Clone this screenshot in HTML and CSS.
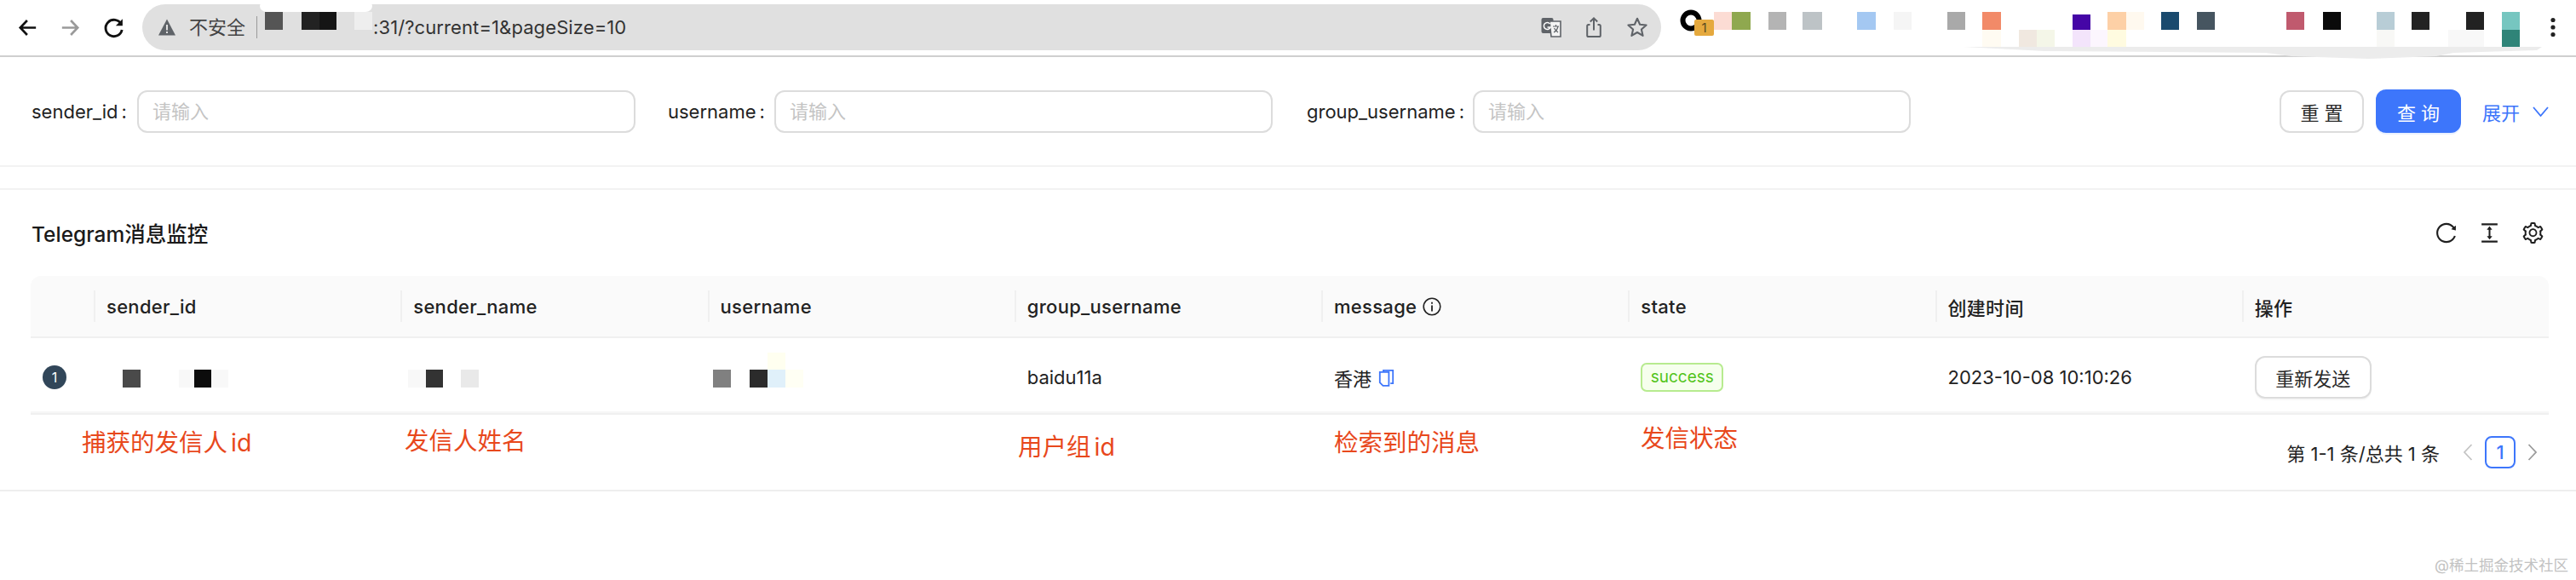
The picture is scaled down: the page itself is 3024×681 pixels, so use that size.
FILE: index.html
```html
<!DOCTYPE html>
<html lang="zh-CN">
<head>
<meta charset="utf-8">
<title>Telegram消息监控</title>
<link rel="stylesheet" href="styles.css">
</head>
<body>
<header class="chrome">
  <div class="nav-btn"><svg class="nav-icon" viewBox="0 0 24 24"><path d="M20 12H5M11.5 5 4.8 12l6.7 7" fill="none" stroke="#111" stroke-width="2.2"/></svg></div>
  <div class="nav-btn"><svg class="nav-icon" viewBox="0 0 24 24"><path d="M4 12h15M12.5 5l6.7 7-6.7 7" fill="none" stroke="#9a9a9a" stroke-width="2.2"/></svg></div>
  <div class="nav-btn"><svg class="nav-icon" viewBox="0 0 24 24"><path d="M19.2 8.6A8 8 0 1 0 20 14" fill="none" stroke="#111" stroke-width="2.4"/><path d="M20.6 3.6v6.6h-6.6z" fill="#111"/></svg></div>
  <div class="omnibox">
    <svg class="warn" viewBox="0 0 22 22"><path d="M11 1.5 21 20.5H1z" fill="#5f6368"/><path d="M10 8h2v6.5h-2zM10 16h2v2h-2z" fill="#e0e0e0"/></svg>
    <span class="secure">不安全</span>
    <span class="omni-divider"></span>
    <span class="url">:31/?current=1&amp;pageSize=10</span>
    <div class="omni-actions">
      <div class="omni-btn"><svg class="omni-icon" viewBox="0 0 26 26"><rect x="1.5" y="2" width="14" height="18" rx="2" fill="#5f6368"/><path d="M11 6h13v18H13z" fill="#f4f4f4" stroke="#5f6368" stroke-width="1.6"/><path d="M11.5 9a4 4 0 1 0 .6 4H8.5" fill="none" stroke="#fff" stroke-width="1.5"/><path d="M15 12h7M18.5 10v2M21 12c-1 4-3 6-5 7M16.5 14c1 2 3 4 4.5 5" fill="none" stroke="#5f6368" stroke-width="1.2"/></svg></div>
      <div class="omni-btn"><svg class="omni-icon" viewBox="0 0 26 26"><path d="M8.5 10H6.8a1.6 1.6 0 0 0-1.6 1.6v10.8A1.6 1.6 0 0 0 6.800 24h12.400a1.600 1.600 0 0 0 1.600-1.600V11.600A1.600 1.600 0 0 0 19.200 10H17.500M13 16.500V2.500M8.800 6.500 13 2.300l4.200 4.200" fill="none" stroke="#5f6368" stroke-width="2"/></svg></div>
      <div class="omni-btn"><svg class="omni-icon" viewBox="0 0 26 26"><path d="m13 2.800 3.100 7 7.500.7-5.700 5 1.700 7.400-6.600-3.900-6.600 3.900 1.700-7.400-5.700-5 7.500-.7z" fill="none" stroke="#5f6368" stroke-width="2.100" stroke-linejoin="round"/></svg></div>
    </div>
  </div>
  <div class="ext">
    <svg class="ext-ring" viewBox="0 0 26 26"><circle cx="13" cy="13" r="9.500" fill="none" stroke="#000" stroke-width="6"/></svg>
    <span class="ext-badge">1</span>
  </div>
  <svg class="kebab" viewBox="0 0 6 24"><circle cx="3" cy="3.500" r="2.600" fill="#222"/><circle cx="3" cy="12" r="2.600" fill="#222"/><circle cx="3" cy="20.500" r="2.600" fill="#222"/></svg>
  <svg class="chrome-mask" viewBox="0 0 3024 68">
    <rect x="305" y="0" width="132" height="14" rx="8" fill="#fff"/>
    <rect x="311" y="14" width="21" height="21" fill="#555"/>
    <rect x="354" y="14" width="21" height="21" fill="#222"/>
    <rect x="375" y="14" width="20" height="21" fill="#151515"/>
    <rect x="416" y="14" width="21" height="21" fill="#eee"/>
    <path d="M2305 55H2984L2978 59 2880 62 2860 66 2780 69 2690 66 2660 62 2400 60Z" fill="#ececec"/>
    <rect x="2012" y="14" width="21" height="21" fill="#fcdcd4"/>
    <rect x="2033" y="14" width="22" height="21" fill="#8fa84f"/>
    <rect x="2076" y="14" width="21" height="21" fill="#b4b4b4"/>
    <rect x="2116" y="14" width="23" height="21" fill="#bdc3c6"/>
    <rect x="2180" y="14" width="22" height="21" fill="#a4c8f2"/>
    <rect x="2223" y="14" width="21" height="21" fill="#f5f5f5"/>
    <rect x="2286" y="14" width="21" height="21" fill="#a9a9a9"/>
    <rect x="2327" y="14" width="22" height="21" fill="#f28a68"/>
    <rect x="2433" y="17" width="21" height="18" fill="#4506a6"/>
    <rect x="2474" y="14" width="22" height="21" fill="#fdd0a6"/>
    <rect x="2496" y="14" width="21" height="21" fill="#fff9ef"/>
    <rect x="2537" y="14" width="21" height="21" fill="#1a4a6e"/>
    <rect x="2579" y="14" width="21" height="21" fill="#465560"/>
    <rect x="2684" y="14" width="21" height="21" fill="#c05a6e"/>
    <rect x="2727" y="14" width="21" height="21" fill="#0a0a0a"/>
    <rect x="2790" y="14" width="21" height="21" fill="#b8cdd6"/>
    <rect x="2831" y="14" width="21" height="21" fill="#222"/>
    <rect x="2895" y="14" width="21" height="21" fill="#222"/>
    <rect x="2937" y="14" width="21" height="21" fill="#76c6c0"/>
    <rect x="2937" y="35" width="21" height="20" fill="#2f8478"/>
    <rect x="2327" y="35" width="22" height="20" fill="#fffbf2"/>
    <rect x="2370" y="35" width="21" height="20" fill="#f0e8e0"/>
    <rect x="2391" y="35" width="21" height="20" fill="#f4f6e8"/>
    <rect x="2433" y="35" width="21" height="20" fill="#f3e4fb"/>
    <rect x="2454" y="35" width="20" height="20" fill="#fcf6fe"/>
    <rect x="2474" y="35" width="22" height="20" fill="#fffbe0"/>
    <rect x="2790" y="35" width="21" height="20" fill="#f8f8f6"/>
    <rect x="2874" y="35" width="42" height="20" fill="#f8f8f8"/>
  </svg>
</header>

<form class="search">
  <div class="field field-a">
    <label class="field-label">sender_id<span class="colon">:</span></label>
    <input class="field-input" placeholder="请输入">
  </div>
  <div class="field field-b">
    <label class="field-label">username<span class="colon">:</span></label>
    <input class="field-input" placeholder="请输入">
  </div>
  <div class="field field-c">
    <label class="field-label">group_username<span class="colon">:</span></label>
    <input class="field-input" placeholder="请输入">
  </div>
  <div class="search-actions">
    <button type="button" class="btn btn-spaced">重 置</button>
    <button type="button" class="btn btn-primary btn-spaced">查 询</button>
    <span class="expand">展开<svg class="expand-icon" viewBox="0 0 19 12"><path d="M1 1l8.500 10L18 1" fill="none" stroke="#3d76fb" stroke-width="1.800"/></svg></span>
  </div>
</form>

<section class="card">
  <div class="card-head">
    <h1 class="card-title">Telegram消息监控</h1>
    <div class="card-tools">
      <svg class="tool-icon" viewBox="64 64 896 896"><path d="M909.1 209.3l-56.4 44.1C775.8 155.1 656.2 92 521.9 92 290 92 102.3 279.5 102 511.5 101.7 743.7 289.8 932 521.9 932c181.3 0 335.8-115 394.6-276.1 1.5-4.2-.7-8.9-4.9-10.3l-56.7-19.5a8 8 0 0 0-10.1 4.8c-1.8 5-3.8 10-5.900 14.900-17.300 41-42.100 77.800-73.700 109.400A344.770 344.770 0 0 1 655.900 829c-42.300 17.900-87.400 27-133.800 27-46.500 0-91.500-9.100-133.800-27A341.500 341.500 0 0 1 279 755.200a342.160 342.160 0 0 1-73.700-109.400c-17.900-42.400-27-87.400-27-133.900s9.100-91.500 27-133.900c17.300-41 42.100-77.800 73.700-109.400 31.600-31.600 68.400-56.400 109.300-73.800 42.300-17.900 87.400-27 133.800-27 46.500 0 91.500 9.100 133.800 27a341.500 341.500 0 0 1 109.300 73.800c9.900 9.900 19.200 20.400 27.800 31.400l-60.200 47a8 8 0 0 0 3 14.100l175.600 43c5 1.200 9.900-2.600 9.900-7.700l.8-180.900c-.1-6.600-7.800-10.300-13-6.200z"/></svg>
      <svg class="tool-icon" viewBox="64 64 896 896"><path d="M840 836H184c-4.400 0-8 3.600-8 8v60c0 4.400 3.600 8 8 8h656c4.400 0 8-3.600 8-8v-60c0-4.400-3.600-8-8-8zm0-724H184c-4.400 0-8 3.600-8 8v60c0 4.400 3.600 8 8 8h656c4.400 0 8-3.600 8-8v-60c0-4.400-3.600-8-8-8zM610.800 378c6 0 9.400-7 5.700-11.700L515.700 238.700a7.140 7.140 0 0 0-11.300 0L403.600 366.300a7.230 7.230 0 0 0 5.700 11.700H476v268h-62.800c-6 0-9.400 7-5.700 11.700l100.800 127.500c2.900 3.700 8.500 3.700 11.300 0l100.800-127.500c3.700-4.700.4-11.700-5.700-11.700H548V378h62.800z"/></svg>
      <svg class="tool-icon" viewBox="64 64 896 896"><path d="M924.800 625.700l-65.500-56c3.100-19 4.700-38.400 4.700-57.800s-1.600-38.800-4.700-57.800l65.500-56a32.030 32.030 0 0 0 9.300-35.200l-.9-2.600a443.740 443.740 0 0 0-79.700-137.900l-1.800-2.100a32.120 32.120 0 0 0-35.100-9.500l-81.300 28.900c-30-24.600-63.500-44-99.700-57.600l-15.700-85a32.050 32.050 0 0 0-25.800-25.700l-2.700-.5c-52.100-9.400-106.900-9.400-159 0l-2.700.5a32.050 32.050 0 0 0-25.800 25.700l-15.800 85.400a351.860 351.860 0 0 0-99 57.400l-81.900-29.100a32 32 0 0 0-35.100 9.500l-1.800 2.100a446.020 446.020 0 0 0-79.700 137.900l-.9 2.600c-4.500 12.500-.8 26.500 9.300 35.200l66.300 56.600c-3.100 18.800-4.600 38-4.600 57.100 0 19.200 1.500 38.400 4.600 57.100L99 625.500a32.030 32.030 0 0 0-9.300 35.200l.9 2.600c18.100 50.400 44.900 96.900 79.700 137.900l1.800 2.100a32.120 32.120 0 0 0 35.100 9.500l81.900-29.100c29.800 24.500 63.100 43.900 99 57.400l15.800 85.400a32.050 32.050 0 0 0 25.800 25.700l2.700.5a449.400 449.400 0 0 0 159 0l2.700-.5a32.050 32.050 0 0 0 25.800-25.700l15.700-85a350 350 0 0 0 99.700-57.600l81.300 28.900a32 32 0 0 0 35.100-9.500l1.800-2.100c34.800-41.100 61.600-87.500 79.700-137.900l.9-2.600c4.500-12.300.8-26.300-9.300-35zM788.300 465.900c2.500 15.100 3.800 30.600 3.800 46.100s-1.300 31-3.800 46.100l-6.600 40.100 74.700 63.900a370.030 370.030 0 0 1-42.600 73.600L721 702.800l-31.400 25.800c-23.900 19.600-50.500 35-79.300 45.800l-38.100 14.300-17.900 97a377.500 377.500 0 0 1-85 0l-17.900-97.200-37.800-14.500c-28.500-10.800-55-26.200-78.700-45.700l-31.400-25.900-93.400 33.200c-17-22.900-31.200-47.600-42.600-73.600l75.500-64.500-6.500-40c-2.400-14.900-3.700-30.300-3.700-45.500 0-15.300 1.200-30.600 3.700-45.500l6.500-40-75.500-64.500c11.300-26.100 25.600-50.700 42.600-73.600l93.400 33.200 31.400-25.900c23.700-19.500 50.200-34.900 78.700-45.700l37.900-14.300 17.900-97.200c28.100-3.200 56.800-3.200 85 0l17.900 97 38.100 14.300c28.700 10.800 55.400 26.200 79.300 45.800l31.400 25.800 92.800-32.900c17 22.900 31.200 47.600 42.600 73.600L781.800 426l6.500 39.900zM512 326c-97.200 0-176 78.800-176 176s78.800 176 176 176 176-78.800 176-176-78.800-176-176-176zm79.200 255.200A111.600 111.600 0 0 1 512 614c-29.900 0-58-11.700-79.200-32.800A111.600 111.600 0 0 1 400 502c0-29.900 11.700-58 32.800-79.200C454 401.600 482.100 390 512 390c29.900 0 58 11.600 79.200 32.800A111.600 111.600 0 0 1 624 502c0 29.900-11.700 58-32.800 79.200z"/></svg>
    </div>
  </div>

  <div class="table">
    <div class="thead grid">
      <div class="th th-first"></div>
      <div class="th"><span>sender_id</span></div>
      <div class="th"><span>sender_name</span></div>
      <div class="th"><span>username</span></div>
      <div class="th"><span>group_username</span></div>
      <div class="th"><span>message</span><svg class="info" viewBox="0 0 22 22"><circle cx="11" cy="11" r="9.800" fill="none" stroke="#222" stroke-width="1.600"/><path d="M10.100 9.500h1.800v7h-1.800zM10.100 5.800h1.800v1.900h-1.800z" fill="#222"/></svg></div>
      <div class="th"><span>state</span></div>
      <div class="th"><span>创建时间</span></div>
      <div class="th"><span>操作</span></div>
    </div>
    <div class="tbody grid">
      <div class="td td-index"><span class="index">1</span></div>
      <div class="td"><svg class="blur-a" viewBox="0 0 144 21"><rect x="19" width="21" height="21" fill="#4a4a4a"/><rect x="85" width="18" height="21" fill="#f8f8f8"/><rect x="103" width="20" height="21" fill="#0c0c0c"/><rect x="123" width="20" height="21" fill="#f8f8f8"/></svg></div>
      <div class="td"><svg class="blur-b" viewBox="0 0 90 21"><rect x="0" width="21" height="21" fill="#f8f8f8"/><rect x="21" width="20" height="21" fill="#333"/><rect x="62" width="21" height="21" fill="#e9e9e9"/></svg></div>
      <div class="td"><svg class="blur-c" viewBox="0 0 112 41"><rect y="20" x="5" width="21" height="21" fill="#808080"/><rect y="20" x="48" width="21" height="21" fill="#2b2b2b"/><rect y="20" x="69" width="21" height="21" fill="#e0f0fa"/><rect y="20" x="90" width="21" height="21" fill="#fffff4"/><rect y="0" x="69" width="21" height="20" fill="#fffff0"/></svg></div>
      <div class="td">baidu11a</div>
      <div class="td"><span>香港</span><svg class="copy" viewBox="0 0 19 21"><path d="M6 3.500V1.800h11.200v15.400h-3" fill="none" stroke="#3d76fb" stroke-width="1.800"/><path d="M1.800 3.800h10.600v16H5.500l-3.700-3.700z" fill="none" stroke="#3d76fb" stroke-width="1.800"/></svg></div>
      <div class="td"><span class="tag">success</span></div>
      <div class="td">2023-10-08 10:10:26</div>
      <div class="td"><button type="button" class="btn btn-resend">重新发送</button></div>
    </div>
  </div>

  <div class="pager">
    <span class="pager-total">第 1-1 条/总共 1 条</span>
    <svg class="pager-arrow" viewBox="0 0 12 22"><path d="M10.500 2 2 11l8.500 9" fill="none" stroke="#c4c4c4" stroke-width="1.800"/></svg>
    <span class="page-current">1</span>
    <svg class="pager-arrow" viewBox="0 0 12 22"><path d="M1.500 2 10 11l-8.500 9" fill="none" stroke="#9a9a9a" stroke-width="1.800"/></svg>
  </div>

  <span class="note note-1">捕获的发信人 id</span>
  <span class="note note-2">发信人姓名</span>
  <span class="note note-3">用户组 id</span>
  <span class="note note-4">检索到的消息</span>
  <span class="note note-5">发信状态</span>
</section>

<span class="watermark">@稀土掘金技术社区</span>
</body>
</html>
```
FILE: styles.css
```css
* { box-sizing: border-box; }
html, body { margin: 0; padding: 0; }
body {
  width: 3024px;
  height: 681px;
  position: relative;
  overflow: hidden;
  background: #fff;
  color: #1f1f1f;
  font-family: Inter, "Noto Sans CJK SC", "Liberation Sans", sans-serif;
  font-size: 22px;
}

/* browser chrome */
.chrome {
  position: relative;
  height: 67px;
  display: flex;
  align-items: center;
  padding: 0 24px 1px 7px;
  border-bottom: 2px solid #cfcfcf;
  background: #fff;
}
.nav-btn { width: 50.500px; height: 50px; display: flex; align-items: center; justify-content: center; flex: none; }
.nav-icon { width: 29px; height: 29px; }
.omnibox {
  margin-left: 8.500px;
  width: 1783px;
  height: 54px;
  border-radius: 27px;
  background: #e0e0e0;
  display: flex;
  align-items: center;
  padding: 0 3px 0 18px;
  flex: none;
  color: #333;
}
.warn { width: 22px; height: 22px; flex: none; }
.secure { margin-left: 15px; color: #444; line-height: 1; }
.omni-divider { width: 1px; height: 26px; background: #9a9a9a; margin-left: 13px; }
.url { margin-left: 136px; color: #333; letter-spacing: 0.100px; }
.omni-actions { margin-left: auto; display: flex; }
.omni-btn { width: 50.500px; height: 50px; display: flex; align-items: center; justify-content: center; }
.omni-icon { width: 26px; height: 26px; }
.ext { position: relative; width: 50px; height: 50px; margin-left: 22px; flex: none; }
.ext-ring { position: absolute; left: 0; top: 4px; width: 26px; height: 26px; }
.ext-badge {
  position: absolute; left: 17px; top: 16px; width: 23px; height: 19px;
  background: #e5a93e; color: #5a4a20; font-size: 15px; line-height: 19px; text-align: center; border-radius: 2px;
}
.kebab { width: 6px; height: 24px; margin-left: auto; flex: none; }
.chrome-mask { position: absolute; left: 0; top: 0; width: 3024px; height: 68px; pointer-events: none; overflow: visible; }

/* search form */
.search {
  height: 129px;
  display: flex;
  align-items: center;
  padding: 0 32px 0 37px;
  border-bottom: 2px solid #f2f2f2;
}
.field { display: flex; align-items: center; flex: none; }
.field-a { width: 709px; margin-right: 38px; }
.field-b { width: 710px; margin-right: 40px; }
.field-c { width: 709px; }
.field-label { flex: none; white-space: nowrap; color: #222; }
.field-a .field-label { width: 124px; }
.field-b .field-label { width: 125px; }
.field-c .field-label { width: 195px; }
.colon { margin-left: 4px; }
.field-input {
  flex: 1;
  min-width: 0;
  height: 50px;
  border: 2px solid #dcdcdc;
  border-radius: 12px;
  padding: 0 16px;
  font: inherit;
  background: #fff;
  outline: none;
}
.field-input::placeholder { color: #c4c4c4; }
.search-actions { margin-left: auto; display: flex; align-items: center; }
.btn {
  height: 50px;
  border: 2px solid #dcdcdc;
  border-radius: 12px;
  background: #fff;
  color: #2a2a2a;
  font: inherit;
  padding: 0;
  white-space: nowrap;
}
.btn-spaced { width: 99px; }
.btn-primary {
  margin-left: 14px;
  width: 100px;
  height: 51px;
  background: #3d76fb;
  border-color: #3d76fb;
  color: #fff;
  box-shadow: 0 2px 0 #eaf1ff;
}
.expand { margin-left: 25px; color: #3d76fb; display: flex; align-items: center; }
.expand-icon { width: 19px; height: 12px; margin-left: 15px; }

/* table card */
.card {
  position: relative;
  margin-top: 25px;
  border-top: 2px solid #f2f2f2;
}
.card-head {
  height: 101px;
  display: flex;
  align-items: center;
  padding: 0 38px 0 37px;
}
.card-title { margin: 0; font-size: 24.500px; font-weight: 500; color: #1a1a1a; }
.card-tools { margin-left: auto; display: flex; gap: 26px; }
.tool-icon { width: 25px; height: 25px; fill: #1f1f1f; }

.table { margin: 0 32px 0 36px; }
.grid { display: grid; grid-template-columns: 74px repeat(8, 1fr); }
.thead {
  height: 73px;
  background: #fafafa;
  border-bottom: 2px solid #f0f0f0;
  border-radius: 12px 12px 0 0;
  font-weight: 500;
  align-items: center;
}
.th {
  height: 37px;
  display: flex;
  align-items: center;
  padding-left: 13px;
  border-left: 2px solid #f0f0f0;
  color: #222;
  white-space: nowrap;
  letter-spacing: 0.300px;
}
.th-first { border-left: 0; }
.info { width: 22px; height: 22px; margin-left: 7px; }
.tbody {
  height: 90px;
  padding-top: 4px;
  border-bottom: 2px solid #f0f0f0;
  box-shadow: inset 0 -3px 0 -1px #f6f6f6;
  align-items: center;
}
.td {
  padding-left: 15px;
  display: flex;
  align-items: center;
  color: #222;
  white-space: nowrap;
}
.td-index { padding-left: 14px; }
.index {
  width: 28px; height: 28px; border-radius: 50%;
  background: #314659; color: #fff;
  font-size: 16px; line-height: 28px; text-align: center;
}
.blur-a { width: 144px; height: 21px; margin-top: 3px; }
.blur-b { width: 90px; height: 21px; margin-left: -6px; margin-top: 3px; }
.blur-c { width: 112px; height: 41px; margin-left: -14px; margin-top: -17px; }
.copy { width: 19px; height: 21px; margin-left: 8px; }
.tag {
  height: 34px;
  width: 97px;
  border: 2px solid #b7eb8f;
  border-radius: 7px;
  background: #f6ffed;
  color: #52c41a;
  font-size: 19px;
  line-height: 30px;
  text-align: center;
}
.btn-resend { width: 137px; box-shadow: 0 2px 0 rgba(0,0,0,0.03); }

.pager {
  height: 90px;
  border-bottom: 2px solid #eee;
  display: flex;
  align-items: center;
  justify-content: flex-end;
  padding-right: 45px;
}
.pager-total { margin-right: 27px; color: #222; }
.pager-arrow { width: 12px; height: 22px; flex: none; }
.page-current {
  width: 36px; height: 38px; margin: 0 14px;
  border: 2px solid #3d76fb;
  border-radius: 8px;
  color: #3d76fb;
  text-align: center;
  line-height: 34px;
  font-weight: 500;
}

/* hand-drawn annotations over the screenshot */
.note { position: absolute; color: #e8481c; font-size: 28.500px; line-height: 40px; white-space: nowrap; word-spacing: -4px; }
.note-1 { left: 96px; top: 277px; }
.note-2 { left: 475px; top: 275px; }
.note-3 { left: 1195px; top: 282px; }
.note-4 { left: 1566px; top: 277px; }
.note-5 { left: 1926px; top: 272px; }

.watermark { position: absolute; left: 2858px; top: 650px; color: #c2c2c2; font-size: 17.500px; line-height: 28px; white-space: nowrap; }
```
